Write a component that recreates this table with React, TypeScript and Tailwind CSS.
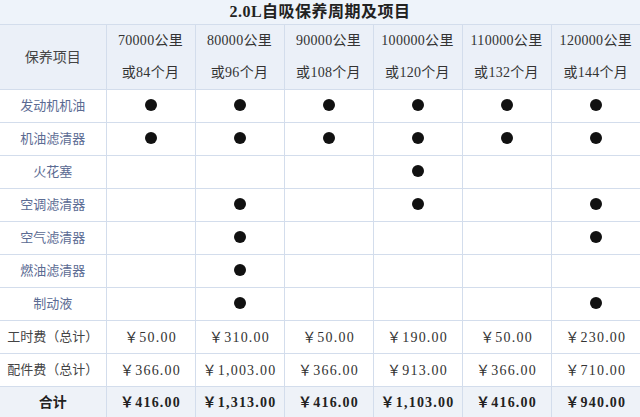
const cols = [
  ['70000公里', '或84个月'],
  ['80000公里', '或96个月'],
  ['90000公里', '或108个月'],
  ['100000公里', '或120个月'],
  ['110000公里', '或132个月'],
  ['120000公里', '或144个月'],
]

const items: [string, boolean[]][] = [
  ['发动机机油', [true, true, true, true, true, true]],
  ['机油滤清器', [true, true, true, true, true, true]],
  ['火花塞', [false, false, false, true, false, false]],
  ['空调滤清器', [false, true, false, true, false, true]],
  ['空气滤清器', [false, true, false, false, false, true]],
  ['燃油滤清器', [false, true, false, false, false, false]],
  ['制动液', [false, true, false, false, false, true]],
]

const labor = ['￥50.00', '￥310.00', '￥50.00', '￥190.00', '￥50.00', '￥230.00']
const parts = ['￥366.00', '￥1,003.00', '￥366.00', '￥913.00', '￥366.00', '￥710.00']
const total = ['￥416.00', '￥1,313.00', '￥416.00', '￥1,103.00', '￥416.00', '￥940.00']

const font = { fontFamily: '"Liberation Serif", "Noto Sans CJK SC", serif' }

function Dot () {
  return <span className="inline-block w-[12px] h-[12px] rounded-full bg-[#111]" />
}

export default function App () {
  const cell = 'border border-[#d3ddec] text-center align-middle p-0'
  return (
    <div className="w-[640px] h-[417px] bg-white overflow-hidden" style={font}>
      <table className="w-[640px] table-fixed border-collapse border-hidden">
        <colgroup>
          <col className="w-[106px]" />
          {cols.map((_, i) => <col key={i} className="w-[89px]" />)}
        </colgroup>
        <tbody>
          <tr className="h-[23px] bg-[#eef3fa]">
            <td colSpan={7} className={`${cell} text-[16px] font-bold text-[#222] tracking-[0.5px]`}>2.0L自吸保养周期及项目</td>
          </tr>
          <tr className="h-[65px] bg-[#ebf0f8]">
            <td className={`${cell} text-[14px] text-[#444]`}>保养项目</td>
            {cols.map(([a, b]) => (
              <td key={a} className={`${cell} text-[14px] text-[#333] leading-[32px] tracking-[0.3px]`}>
                <div>{a}</div>
                <div>{b}</div>
              </td>
            ))}
          </tr>
          {items.map(([name, marks]) => (
            <tr key={name} className="h-[33px] bg-white">
              <td className={`${cell} text-[13px] text-[#5b6b93]`}>{name}</td>
              {marks.map((m, i) => (
                <td key={i} className={cell}>{m ? <Dot /> : null}</td>
              ))}
            </tr>
          ))}
          <tr className="h-[33px] bg-white">
            <td className={`${cell} text-[13px] text-[#444]`}>工时费（总计）</td>
            {labor.map((v, i) => <td key={i} className={`${cell} text-[14px] text-[#333] tracking-[1.2px]`}>{v}</td>)}
          </tr>
          <tr className="h-[33px] bg-white">
            <td className={`${cell} text-[13px] text-[#444]`}>配件费（总计）</td>
            {parts.map((v, i) => <td key={i} className={`${cell} text-[14px] text-[#333] tracking-[1.2px]`}>{v}</td>)}
          </tr>
          <tr className="h-[32px] bg-[#eef2f8]">
            <td className={`${cell} text-[14px] font-bold text-[#222]`}>合计</td>
            {total.map((v, i) => <td key={i} className={`${cell} text-[14px] font-bold text-[#222] tracking-[1.2px]`}>{v}</td>)}
          </tr>
        </tbody>
      </table>
    </div>
  )
}
